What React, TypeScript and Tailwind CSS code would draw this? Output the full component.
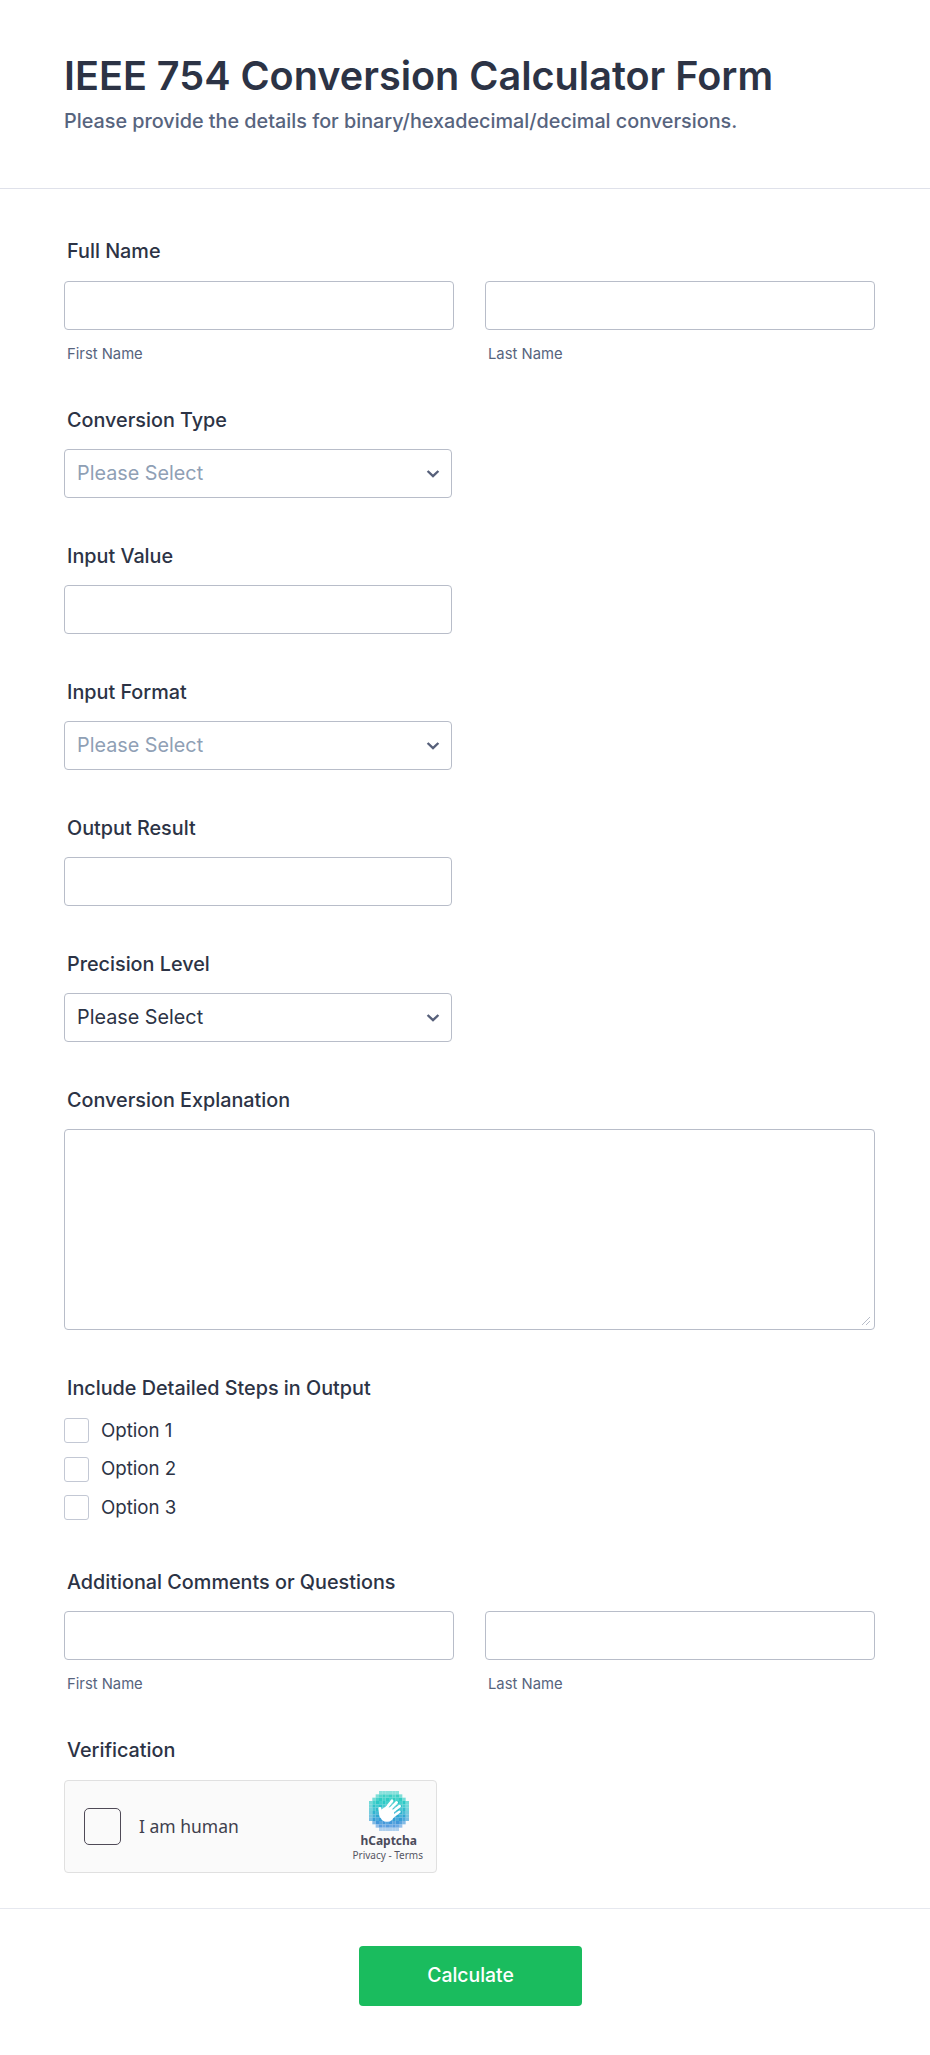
const inter = "font-['Inter',sans-serif]";

function Label({ children }: { children: React.ReactNode }) {
  return <div className="ml-[3px] h-6 text-[19.8px] leading-6 font-medium text-[#2c3345]">{children}</div>;
}

function Chevron() {
  return (
    <svg width="14" height="10" viewBox="0 0 14 10" fill="none" className="shrink-0">
      <path d="M1.6 2 L7 7.2 L12.4 2" stroke="#57607a" strokeWidth="2.4" />
    </svg>
  );
}

function Select({ value, dark }: { value: string; dark?: boolean }) {
  return (
    <div className="mt-[17px] flex h-[49px] w-[388px] items-center justify-between rounded border border-[#b8bdc9] bg-white pl-[12px] pr-[11px]">
      <span className={`pt-[1px] text-[19.8px] ${dark ? "text-[#2c3345]" : "text-[#8fa0b5]"}`}>{value}</span>
      <Chevron />
    </div>
  );
}

function Input() {
  return <div className="mt-[17px] h-[49px] w-[388px] rounded border border-[#b8bdc9] bg-white" />;
}

function NameRow({ gap }: { gap: "first" | "other" }) {
  return (
    <div className={`${gap === "first" ? "mt-[18px]" : "mt-[17px]"} grid grid-cols-2 gap-x-[31px]`}>
      {["First Name", "Last Name"].map((s) => (
        <div key={s}>
          <div className="h-[49px] rounded border border-[#b8bdc9] bg-white" />
          <div className="mt-[15px] ml-[3px] text-[14.8px] leading-[18px] text-[#57647e]">{s}</div>
        </div>
      ))}
    </div>
  );
}

function Check({ text }: { text: string }) {
  return (
    <div className="flex h-[25px] items-center">
      <div className="h-[25px] w-[25px] rounded-[3px] border border-[#c3c8d4] bg-white" />
      <span className="ml-[12px] text-[18.7px] leading-6 text-[#2c3345]">{text}</span>
    </div>
  );
}

function HCaptchaLogo() {
  const rows: [number, number][] = [
    [3, 6], [2, 8], [1, 10], [0, 12], [0, 12], [0, 12], [0, 12], [0, 12], [0, 12], [1, 10], [2, 8], [3, 6],
  ];
  const cols = ["#4fd4cc", "#3dd0c6", "#2fcdc4", "#2bc9c6", "#2dc4ca", "#30bdcc", "#30b3d0", "#2fa8d3", "#359ed6", "#4298da", "#5a9fe0", "#84b8e8"];
  return (
    <svg width="40" height="40" viewBox="0 0 36 36" className="ml-[3px]">
      {rows.map(([start, n], y) =>
        Array.from({ length: n }).map((_, i) => {
          const x = start + i;
          const outer = x === start || x === start + n - 1 || y === 0 || y === 11;
          return <rect key={`${x}-${y}`} x={x * 3} y={y * 3} width="3" height="3" fill={cols[y]} opacity={outer ? 0.65 : (x + y) % 2 ? 1 : 0.88} />;
        })
      )}
      <g transform="scale(0.9)" fill="#fff" stroke="#fff" strokeLinecap="round">
        <circle cx="18" cy="23.4" r="7.4" stroke="none" />
        <path d="M12 25 L10.8 17.4" strokeWidth="3" fill="none" />
        <path d="M15 20 L23 9.8" strokeWidth="2.8" fill="none" />
        <path d="M18.6 20.5 L27.6 11.6" strokeWidth="2.8" fill="none" />
        <path d="M22 22 L30.6 15.2" strokeWidth="2.8" fill="none" />
        <path d="M24 25.5 L30.4 20.8" strokeWidth="2.6" fill="none" />
      </g>
    </svg>
  );
}

export default function App() {
  return (
    <div className={`${inter} min-h-[2055px] w-[930px] bg-white`}>
      <header className="h-[189px] border-b border-[#dfe1ea] px-16 pt-[50px]">
        <h1 className="text-[39.6px] leading-[52px] font-semibold text-[#2c3345]">IEEE 754 Conversion Calculator Form</h1>
        <p className="mt-[7px] text-[19.8px] leading-6 font-medium text-[#57647e]">
          Please provide the details for binary/hexadecimal/decimal conversions.
        </p>
      </header>
      <main className="pl-16 pr-[55px] pt-[50px]">
        <section>
          <Label>Full Name</Label>
          <NameRow gap="first" />
        </section>
        <section className="mt-[45px]">
          <Label>Conversion Type</Label>
          <Select value="Please Select" />
        </section>
        <section className="mt-[46px]">
          <Label>Input Value</Label>
          <Input />
        </section>
        <section className="mt-[46px]">
          <Label>Input Format</Label>
          <Select value="Please Select" />
        </section>
        <section className="mt-[46px]">
          <Label>Output Result</Label>
          <Input />
        </section>
        <section className="mt-[46px]">
          <Label>Precision Level</Label>
          <Select value="Please Select" dark />
        </section>
        <section className="mt-[46px]">
          <Label>Conversion Explanation</Label>
          <div className="relative mt-[17px] h-[201px] rounded border border-[#b8bdc9] bg-white">
            <svg width="10" height="10" viewBox="0 0 10 10" className="absolute right-[3px] bottom-[3px]">
              <path d="M1 9 L9 1 M5 9 L9 5" stroke="#b8bdc9" strokeWidth="1" />
            </svg>
          </div>
        </section>
        <section className="mt-[46px]">
          <Label>Include Detailed Steps in Output</Label>
          <div className="mt-[18px] flex flex-col gap-[13.5px]">
            <Check text="Option 1" />
            <Check text="Option 2" />
            <Check text="Option 3" />
          </div>
        </section>
        <section className="mt-[50px]">
          <Label>Additional Comments or Questions</Label>
          <NameRow gap="other" />
        </section>
        <section className="mt-[45px]">
          <Label>Verification</Label>
          <div className="mt-[18px] flex h-[93px] w-[373px] items-center rounded border border-[#e0e0e0] bg-[#fafafa] pl-[19px] pr-[13px] font-['Noto_Sans',sans-serif]">
            <div className="h-[37px] w-[37px] rounded-[5px] border border-[#4f4a57] bg-[#fafafa]" />
            <span className="ml-[18px] text-[17.5px] text-[#3f3f4d]">I am human</span>
            <div className="ml-auto flex flex-col items-center">
              <HCaptchaLogo />
              <span className="mt-[2px] ml-[2px] text-[12px] leading-[15px] font-bold text-[#4b4b5a]">hCaptcha</span>
              <span className="text-[10px] leading-[14px] text-[#555562]">Privacy - Terms</span>
            </div>
          </div>
        </section>
      </main>
      <footer className="mt-[35px] flex justify-center border-t border-[#e6e8ef] pl-[11px] pt-[37px]">
        <button className="h-[60px] w-[223px] rounded bg-[#1abc5e] text-[19.4px] font-medium text-white">Calculate</button>
      </footer>
    </div>
  );
}
